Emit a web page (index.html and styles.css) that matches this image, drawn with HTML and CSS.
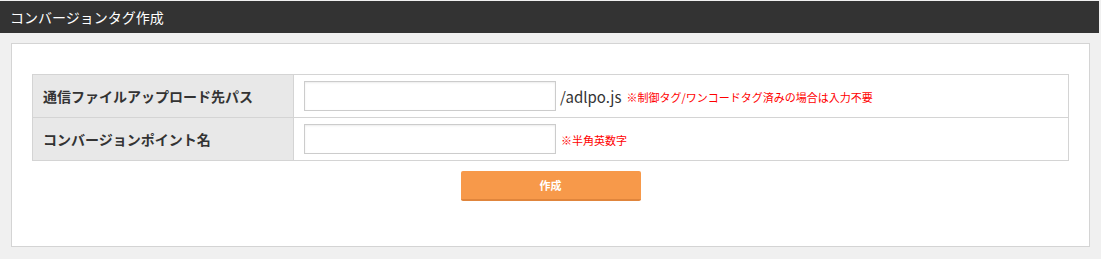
FILE: index.html
```html
<!DOCTYPE html>
<html lang="ja">
<head>
<meta charset="utf-8">
<title>コンバージョンタグ作成</title>
<link rel="stylesheet" href="styles.css">
</head>
<body>
<div class="page">
  <header class="page-header">コンバージョンタグ作成</header>
  <main class="content">
    <section class="card">
      <table class="form-table">
        <tr>
          <th>通信ファイルアップロード先パス</th>
          <td>
            <div class="field">
              <input type="text" class="text-input">
              <span class="suffix">/adlpo.js</span>
              <span class="note">※制御タグ/ワンコードタグ済みの場合は入力不要</span>
            </div>
          </td>
        </tr>
        <tr>
          <th>コンバージョンポイント名</th>
          <td>
            <div class="field">
              <input type="text" class="text-input">
              <span class="note">※半角英数字</span>
            </div>
          </td>
        </tr>
      </table>
      <div class="actions">
        <button type="button" class="btn-create">作成</button>
      </div>
    </section>
  </main>
</div>
</body>
</html>
```
FILE: styles.css
```css
* { box-sizing: border-box; }
html, body {
  margin: 0;
  padding: 0;
  background: #f0f0f0;
  font-family: "Noto Sans CJK JP", "Noto Sans", sans-serif;
  color: #333;
}
.page {
  padding-top: 1px;
  padding-right: 2px;
}
.page-header {
  background: #333333;
  color: #fff;
  height: 32px;
  line-height: 32px;
  padding-left: 10px;
  font-size: 14px;
}
.content {
  padding: 10px 9px 11px 11px;
}
.card {
  background: #fff;
  border: 1px solid #d4d4d4;
  padding: 30px 20px 45px 20px;
}
.form-table {
  width: 100%;
  border-collapse: collapse;
  border: 1px solid #d4d4d4;
}
.form-table th,
.form-table td {
  border: 1px solid #d4d4d4;
  height: 43px;
  padding: 0 10px;
  vertical-align: middle;
}
.form-table th {
  width: 261px;
  background: #e8e8e8;
  text-align: left;
  font-size: 14px;
  font-weight: bold;
  color: #333;
}
.field {
  display: flex;
  align-items: center;
}
.text-input {
  width: 252px;
  height: 30px;
  border: 1px solid #cccccc;
  box-shadow: inset 0 1px 2px rgba(0,0,0,0.08);
  margin: 0;
  padding: 0 6px;
  font-family: inherit;
}
.suffix {
  font-size: 15px;
  color: #333;
  margin-left: 4px;
}
.note {
  font-size: 11px;
  color: #ff0000;
  margin-left: 5px;
  margin-top: 2px;
}
.actions {
  display: flex;
  justify-content: center;
  margin-top: 10px;
}
.btn-create {
  width: 180px;
  height: 30px;
  background: #f7994a;
  border: none;
  border-bottom: 2px solid #e0853c;
  border-radius: 2px;
  color: #fff;
  font-family: inherit;
  font-size: 11px;
  font-weight: bold;
  padding: 0;
}
```
